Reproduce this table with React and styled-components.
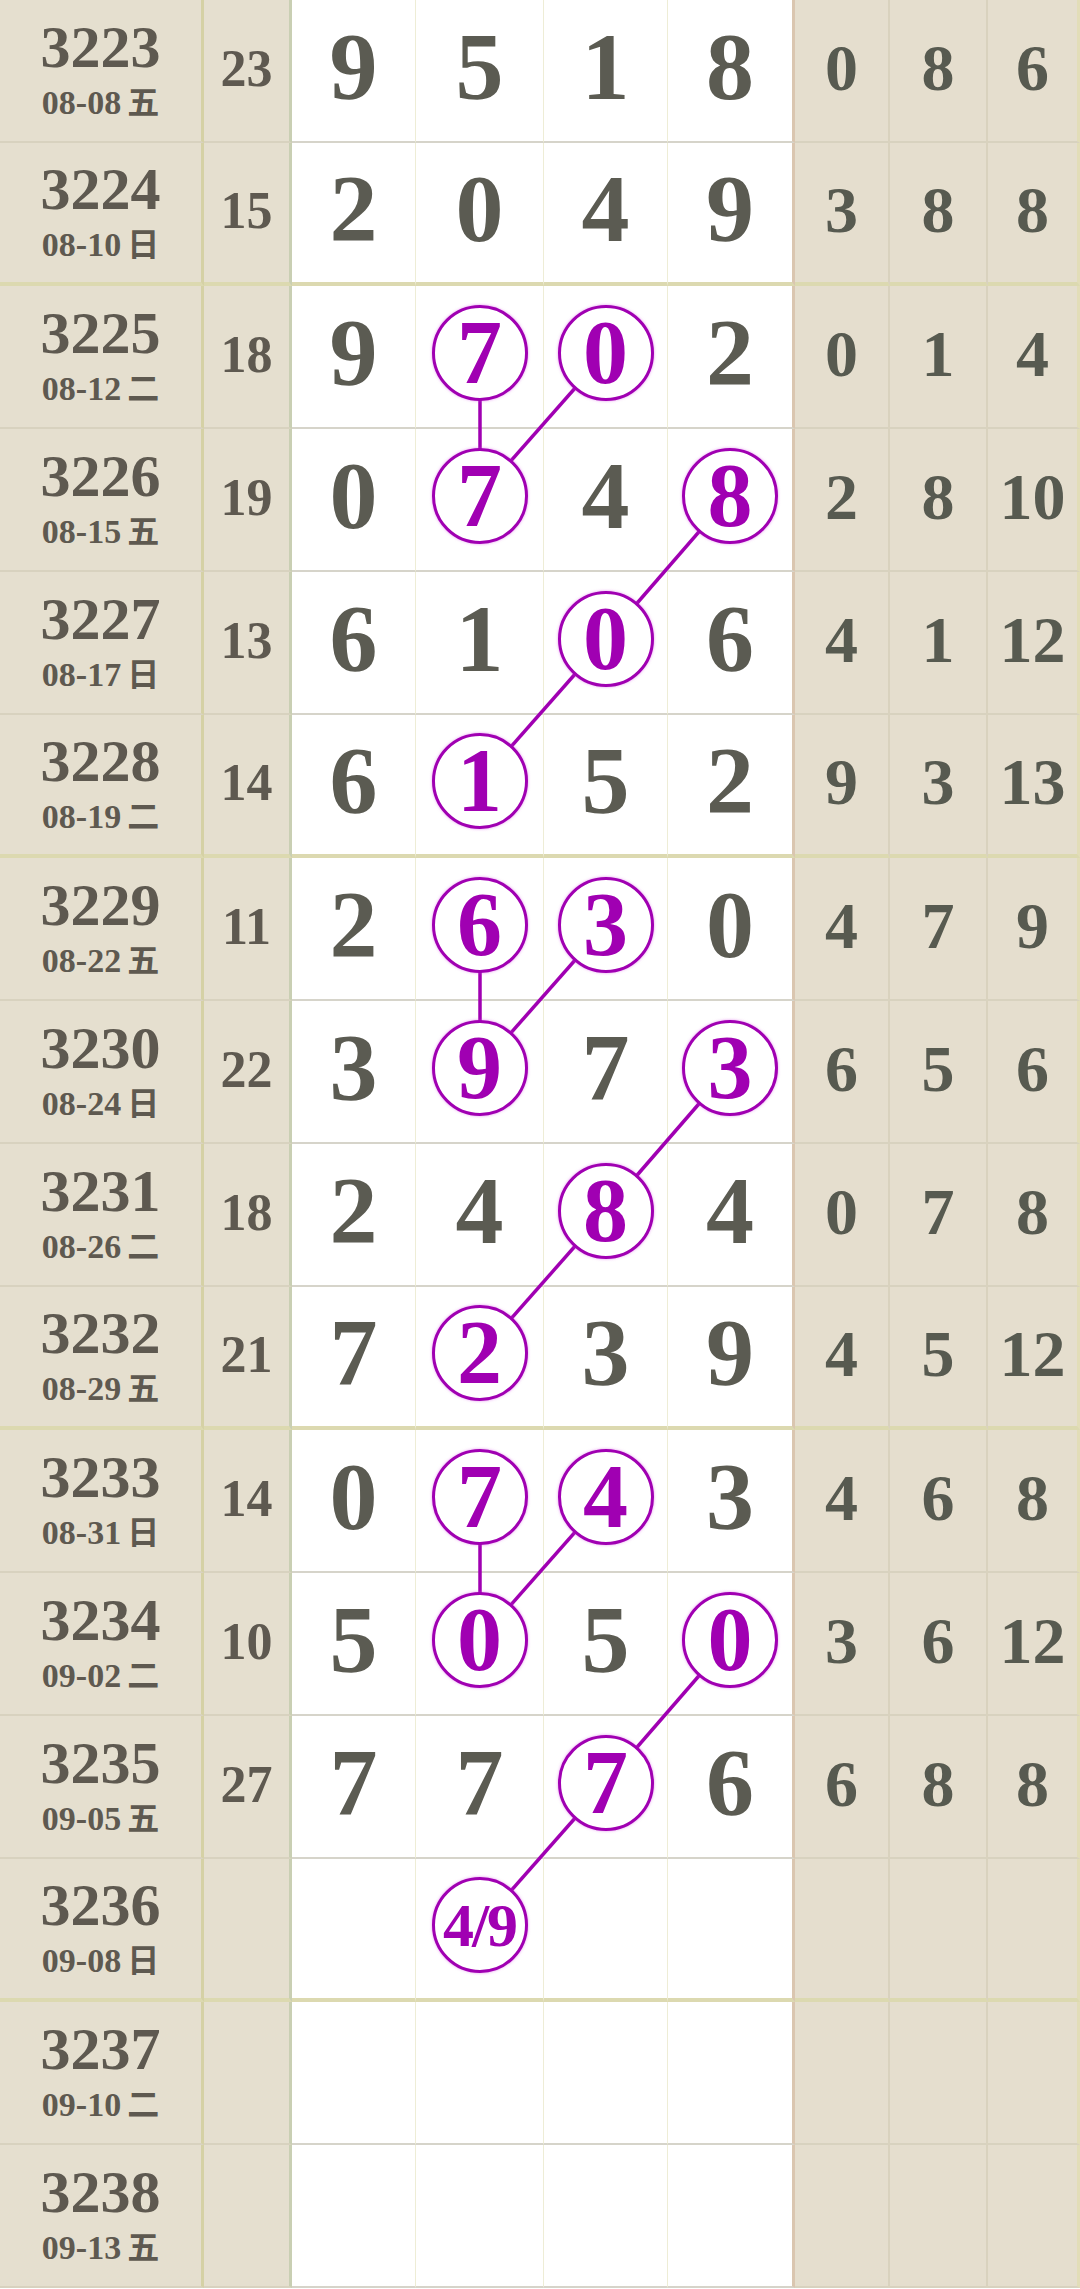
import React from 'react';
import styled, { createGlobalStyle } from 'styled-components';

const ROW_H = 143;
const PURPLE = '#a000b2';
const COLS = '204px 88px 124px 128px 124px 127px 95px 98px 92px';
// centre x of the four main columns (used for the connecting lines)
const MAIN_X = [354, 480, 606, 730];

const rows = [
  { no: '3223', date: '08-08', wd: '五', sum: '23', main: ['9', '5', '1', '8'], side: ['0', '8', '6'] },
  { no: '3224', date: '08-10', wd: '日', sum: '15', main: ['2', '0', '4', '9'], side: ['3', '8', '8'] },
  { no: '3225', date: '08-12', wd: '二', sum: '18', main: ['9', '7', '0', '2'], side: ['0', '1', '4'], ring: [1, 2] },
  { no: '3226', date: '08-15', wd: '五', sum: '19', main: ['0', '7', '4', '8'], side: ['2', '8', '10'], ring: [1, 3] },
  { no: '3227', date: '08-17', wd: '日', sum: '13', main: ['6', '1', '0', '6'], side: ['4', '1', '12'], ring: [2] },
  { no: '3228', date: '08-19', wd: '二', sum: '14', main: ['6', '1', '5', '2'], side: ['9', '3', '13'], ring: [1] },
  { no: '3229', date: '08-22', wd: '五', sum: '11', main: ['2', '6', '3', '0'], side: ['4', '7', '9'], ring: [1, 2] },
  { no: '3230', date: '08-24', wd: '日', sum: '22', main: ['3', '9', '7', '3'], side: ['6', '5', '6'], ring: [1, 3] },
  { no: '3231', date: '08-26', wd: '二', sum: '18', main: ['2', '4', '8', '4'], side: ['0', '7', '8'], ring: [2] },
  { no: '3232', date: '08-29', wd: '五', sum: '21', main: ['7', '2', '3', '9'], side: ['4', '5', '12'], ring: [1] },
  { no: '3233', date: '08-31', wd: '日', sum: '14', main: ['0', '7', '4', '3'], side: ['4', '6', '8'], ring: [1, 2] },
  { no: '3234', date: '09-02', wd: '二', sum: '10', main: ['5', '0', '5', '0'], side: ['3', '6', '12'], ring: [1, 3] },
  { no: '3235', date: '09-05', wd: '五', sum: '27', main: ['7', '7', '7', '6'], side: ['6', '8', '8'], ring: [2] },
  { no: '3236', date: '09-08', wd: '日', sum: '', main: ['', '4/9', '', ''], side: ['', '', ''], ring: [1] },
  { no: '3237', date: '09-10', wd: '二', sum: '', main: ['', '', '', ''], side: ['', '', ''] },
  { no: '3238', date: '09-13', wd: '五', sum: '', main: ['', '', '', ''], side: ['', '', ''] },
];

// [rowA, colA, rowB, colB]
const links = [
  [2, 1, 3, 1], [2, 2, 3, 1], [3, 3, 4, 2], [4, 2, 5, 1],
  [6, 1, 7, 1], [6, 2, 7, 1], [7, 3, 8, 2], [8, 2, 9, 1],
  [10, 1, 11, 1], [10, 2, 11, 1], [11, 3, 12, 2], [12, 2, 13, 1],
];

const GlobalStyle = createGlobalStyle`
  body {
    margin: 0;
    background: #ffffff;
    font-family: "Liberation Serif", "Times New Roman", serif;
  }
`;

const Board = styled.div`
  position: relative;
  width: 1080px;
  overflow: hidden;
`;

const Row = styled.div`
  display: grid;
  grid-template-columns: ${COLS};
  height: ${ROW_H}px;
`;

const Cell = styled.div`
  box-sizing: border-box;
  display: flex;
  align-items: center;
  justify-content: center;
  font-weight: bold;
  border-bottom: ${(p) => (p.$group ? '4px solid #dcd9b0' : `2px solid ${p.$line || '#d8d2bf'}`)};
`;

const IssueCell = styled(Cell)`
  flex-direction: column;
  background: #e5dfcf;
  border-right: 3px solid #d5d1a5;
  color: #5e5950;
`;

const IssueNo = styled.div`
  font-size: 60px;
  line-height: 62px;
`;

const IssueDate = styled.div`
  font-size: 34px;
  line-height: 44px;
`;

const Weekday = styled.span`
  font-family: "Noto Sans CJK SC", sans-serif;
  font-size: 32px;
  font-weight: bold;
  margin-left: 6px;
`;

const SumCell = styled(Cell)`
  background: #e5dfcf;
  border-right: 3px solid #c9cfb3;
  color: #5e5950;
  font-size: 52px;
  padding-bottom: 4px;
`;

const MainCell = styled(Cell)`
  background: #ffffff;
  border-right: ${(p) => (p.$last ? '3px solid #dac6b0' : '1px solid #eeedd6')};
  color: #5b5b52;
  font-size: 96px;
  line-height: 1;
  padding-bottom: 7px;
`;

const Ring = styled.div`
  position: relative;
  z-index: 2;
  box-sizing: border-box;
  width: 96px;
  height: 96px;
  border: 3px solid ${PURPLE};
  border-radius: 50%;
  background: #ffffff;
  box-shadow: 0 0 3px rgba(210, 60, 230, 0.55);
  display: flex;
  align-items: center;
  justify-content: center;
  color: ${PURPLE};
  font-size: ${(p) => (p.$small ? '62px' : '90px')};
  line-height: 1;
  letter-spacing: ${(p) => (p.$small ? '-2px' : '0')};
`;

const SideCell = styled(Cell)`
  background: #e5dece;
  border-right: ${(p) => (p.$last ? '3px solid #e2ddb8' : '2px solid #d9d2be')};
  color: #575a50;
  font-size: 66px;
  padding-bottom: 6px;
`;

const Links = styled.svg`
  position: absolute;
  top: 0;
  left: 0;
  z-index: 1;
  pointer-events: none;
`;

const centerY = (r) => r * ROW_H + 67;

export default function App() {
  return (
    <Board>
      <GlobalStyle />
      {rows.map((row, i) => {
        const group = i === 1 || i === 5 || i === 9 || i === 13;
        const ring = row.ring || [];
        return (
          <Row key={row.no}>
            <IssueCell $group={group}>
              <IssueNo>{row.no}</IssueNo>
              <IssueDate>
                {row.date}
                <Weekday>{row.wd}</Weekday>
              </IssueDate>
            </IssueCell>
            <SumCell $group={group}>{row.sum}</SumCell>
            {row.main.map((d, j) => (
              <MainCell key={j} $group={group} $last={j === 3} $line="#d6d4ca">
                {ring.includes(j) ? <Ring $small={d.length > 1}>{d}</Ring> : d}
              </MainCell>
            ))}
            {row.side.map((d, j) => (
              <SideCell key={j} $group={group} $last={j === 2}>
                {d}
              </SideCell>
            ))}
          </Row>
        );
      })}
      <Links width="1080" height={rows.length * ROW_H}>
        {links.map(([ra, ca, rb, cb], k) => (
          <line
            key={k}
            x1={MAIN_X[ca]}
            y1={centerY(ra)}
            x2={MAIN_X[cb]}
            y2={centerY(rb)}
            stroke={PURPLE}
            strokeWidth="3.5"
          />
        ))}
      </Links>
    </Board>
  );
}
